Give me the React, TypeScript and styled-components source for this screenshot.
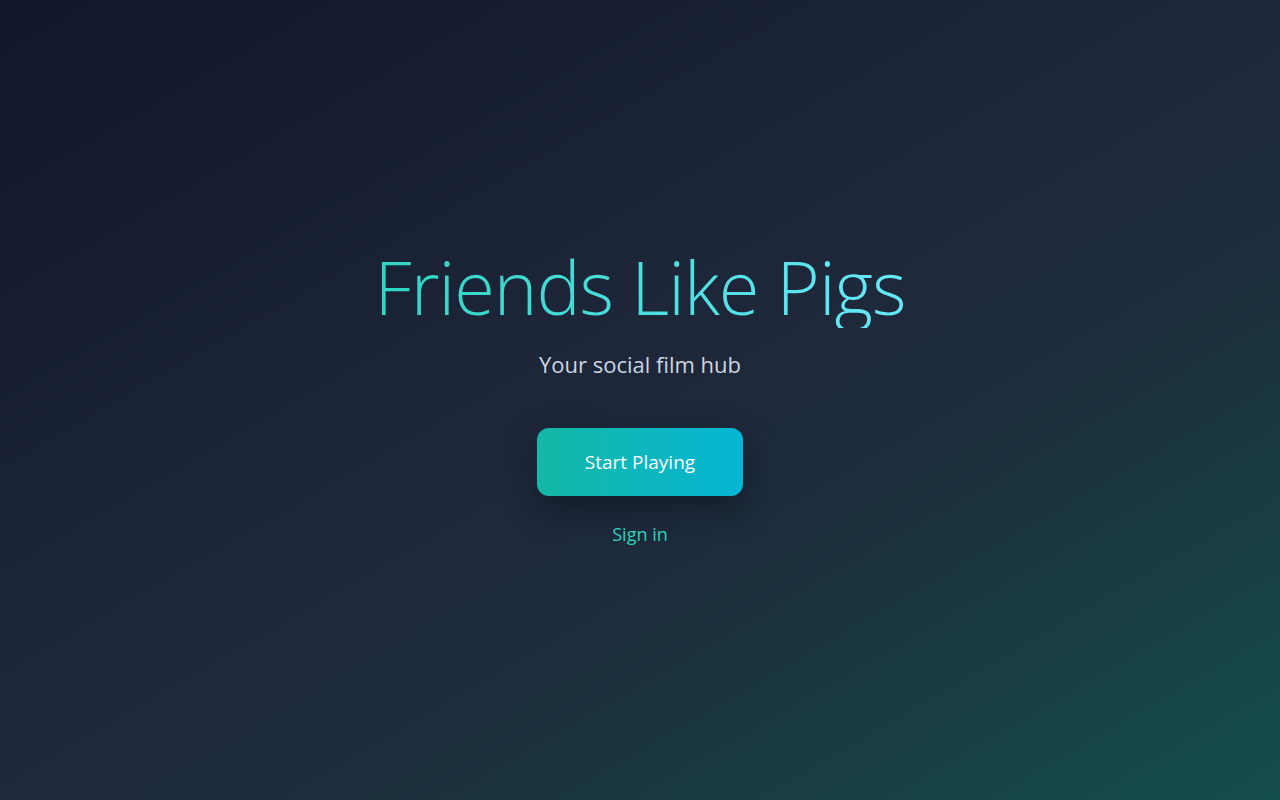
import React, { FC } from 'react';
import styled, { createGlobalStyle } from 'styled-components';

const GlobalStyle = createGlobalStyle`
  html, body {
    margin: 0;
    padding: 0;
    height: 100%;
  }

  body {
    font-family: 'Open Sans', 'Liberation Sans', sans-serif;
    -webkit-font-smoothing: antialiased;
  }

  #root {
    height: 100%;
  }
`;

const Page = styled.main`
  box-sizing: border-box;
  width: 100%;
  height: 100vh;
  padding-bottom: 8px;
  display: flex;
  flex-direction: column;
  align-items: center;
  justify-content: center;
  background: linear-gradient(
    150deg,
    #10172a 0%,
    #1e2639 45%,
    #1d2c3c 62%,
    #134e4a 100%
  );
`;

const Title = styled.h1`
  margin: 0;
  font-size: 74px;
  font-weight: 300;
  line-height: 1.1;
  letter-spacing: -1px;
  background: linear-gradient(90deg, #2fd4c2 0%, #67e8f9 100%);
  -webkit-background-clip: text;
  background-clip: text;
  color: transparent;
`;

const Tagline = styled.p`
  margin: 21px 0 0;
  font-size: 22px;
  font-weight: 400;
  color: #cbd5e1;
`;

const PrimaryButton = styled.button`
  margin-top: 49px;
  width: 206px;
  height: 68px;
  border: none;
  border-radius: 12px;
  background: linear-gradient(90deg, #14b8a6 0%, #06b6d4 100%);
  box-shadow: 0 12px 32px rgba(6, 12, 24, 0.45);
  color: #ffffff;
  font-family: inherit;
  font-size: 19px;
  cursor: pointer;
`;

const LinkButton = styled.a`
  margin-top: 26px;
  font-size: 18px;
  color: #2dd4bf;
  text-decoration: none;
  cursor: pointer;
`;

const App: FC = () => (
  <>
    <GlobalStyle />
    <Page>
      <Title>Friends Like Pigs</Title>
      <Tagline>Your social film hub</Tagline>
      <PrimaryButton>Start Playing</PrimaryButton>
      <LinkButton>Sign in</LinkButton>
    </Page>
  </>
);

export default App;
